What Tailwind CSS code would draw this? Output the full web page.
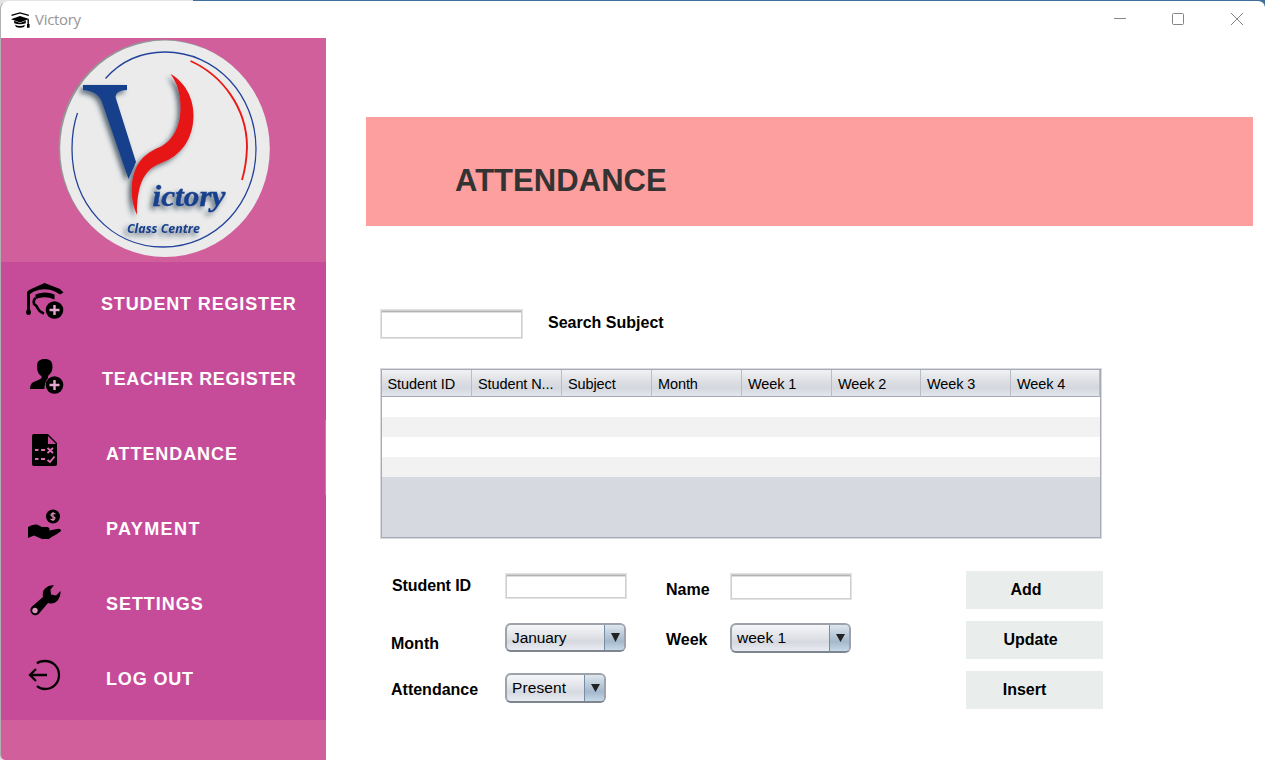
<!DOCTYPE html>
<html lang="en">
<head>
<meta charset="utf-8">
<title>Victory</title>
<script src="https://cdn.jsdelivr.net/npm/@tailwindcss/browser@4"></script>
</head>
<body class="h-[760px] w-[1265px] overflow-hidden bg-[linear-gradient(90deg,#e4e4e4_0_193px,#41709d_193px)] font-['Liberation_Sans',sans-serif] text-black">
<div class="flex h-[760px] flex-col overflow-hidden rounded-tl-[9px] rounded-tr-[7px] rounded-bl-[5px] border-l border-t border-l-[#b0b0b0] border-t-transparent bg-white bg-clip-padding">
  <header class="flex h-[37px] shrink-0 items-center justify-between pl-[10px] pr-[21px]">
    <div class="flex items-center gap-[5px]">
      <svg class="mt-[2px]" width="19" height="17" viewBox="0 0 19 17">
        <path d="M.5 3.400 9 .9l8.800 2.500" fill="none" stroke="#000" stroke-width="1.400"/>
        <path d="M0 7.200 9 4l9.200 3.100L9 10.500Z"/>
        <path d="M3.200 8.800 9 11l5.800-2.200v2.400Q9 13.500 3.200 11.200Z"/>
        <path d="M4 12.800Q9 15.200 14 12.800L13 15Q9 16.500 5 15Z"/>
        <path d="M17.200 7.200v6" fill="none" stroke="#000" stroke-width="1.400"/>
        <path d="M16 12h2.600v3.800H16Z"/>
      </svg>
      <h1 class="-mt-[2px] font-['Open_Sans',sans-serif] text-[15px] leading-5 tracking-[-0.3px] text-[#969696]">Victory</h1>
    </div>
    <svg class="-mt-[2px]" width="130" height="14" viewBox="0 0 130 14" fill="none" stroke="#858585">
      <path d="M0 6.500h12"/><rect x="58.500" y="1.500" width="11" height="11" rx="1"/><path d="m117 1 12 12M129 1l-12 12"/>
    </svg>
  </header>
  <div class="flex min-h-0 flex-1">
    <aside class="w-[325px] shrink-0 bg-[#d15f9b]">
      <div class="h-[224px]">
        <svg width="325" height="224" viewBox="1 38 325 224">
          <defs><filter id="shadow" x="-30%" y="-30%" width="160%" height="160%"><feDropShadow dx="-3" dy="3" stdDeviation="2.5" flood-color="#1e3447" flood-opacity=".7"/></filter></defs>
          <ellipse cx="163.500" cy="147.500" rx="105" ry="108" fill="#969696"/>
          <ellipse cx="165" cy="148.800" rx="104.800" ry="108.200" fill="#ebebeb"/>
          <path d="M105.500 78.500C121 61 142 52 165 52C216 52 256 95 256 149C256 203 216 247 163 247C111 247 72 204 72 149C72 136 74 123 77.500 113" fill="none" stroke="#24429a" stroke-width="1.300"/>
          <path d="M190.500 61C222 75 247 108 247 147Q246.500 165 242 180" fill="none" stroke="#eb1a16" stroke-width="1.900"/>
          <g filter="url(#shadow)">
            <path d="M83 85H127V90Q116 90 115.500 97L136 162L128.500 179L102 102Q98 91 83 90Z" fill="#143f8c"/>
            <path d="M170.500 74C185 82 193.500 98 193.500 115C193.500 139 181 156 161 163C142 170 137 188 137 215C130 200 130 181 136 168C141 157 150 151 160 147C178 138 183 116 179.500 96Q178 84 170.500 74Z" fill="#e71519"/>
            <text x="152.500" y="205.500" textLength="73" lengthAdjust="spacingAndGlyphs" fill="#173f8d" stroke="#173f8d" stroke-width=".4" class="font-['Liberation_Serif',serif] text-[30px] font-bold italic">ictory</text>
            <text x="127" y="233" textLength="73" lengthAdjust="spacingAndGlyphs" fill="#173f8d" class="font-['Open_Sans',sans-serif] text-[13px] font-bold italic">Class Centre</text>
          </g>
        </svg>
      </div>
      <nav class="h-[458px] bg-[#c64c9a] pt-2 text-[18px] font-bold leading-5 tracking-[0.85px] text-white">
        <a class="flex h-[75px] pl-[25px]">
          <svg class="mt-[12px] mr-[36px]" width="39" height="39" viewBox="0 0 39 39">
            <path d="M18.500 1 34 7 37.500 10.500 34 12.500 29 9.500Q19 5 8 9.500L4 12V27L5 30Q5 33 2.500 33T0 30L1 27V10L3 8Z"/>
            <path d="M9.500 12.500Q19 8.500 28.500 12.500V17.500Q19 13.500 9.500 17Z"/>
            <path d="M9.500 16Q7 18 8 22L10.500 24Q13 30 18 31.500" fill="none" stroke="#000" stroke-width="2.600"/>
            <circle cx="28.500" cy="28" r="8.800"/><path d="M23.500 28h10M28.500 23v10" stroke="#e6a9ce" stroke-width="2.400"/>
          </svg><span class="pt-6">STUDENT REGISTER</span>
        </a>
        <a class="flex h-[75px] pl-[25px]">
          <svg class="mt-[12px] mr-[37px]" width="39" height="39" viewBox="0 0 39 39">
            <path d="M11 9C11 4 14 2 18.500 2C24 2 26.500 4 26.500 10C26.500 14 25 16.500 22 19V21Q18.500 25 18.500 32H4Q4 25 10 24Q15 22 15.500 21V19Q11 17 11 9Z"/>
            <circle cx="28.500" cy="28" r="8.800"/><path d="M23.500 28h10M28.500 23v10" stroke="#e6a9ce" stroke-width="2.400"/>
          </svg><span class="pt-6 tracking-[0.65px]">TEACHER REGISTER</span>
        </a>
        <a class="flex h-[75px] border-r border-[#f0699f] pl-[31px]">
          <svg class="mt-[14px] mr-[48px]" width="26" height="32" viewBox="0 0 26 32">
            <path d="M2 0H16L25 9V30Q25 32 23 32H2Q0 32 0 30V2Q0 0 2 0Z"/>
            <path d="M16 2v8h8Z" fill="#c64c9a"/>
            <g fill="none" stroke="#d86faf" stroke-width="1.900"><path d="M3 16h3.500M9 16h4M3 25h3.500M9 25h4M15.500 14l5.500 5M21 14l-5.500 5M15.500 26l2.500 2 4.500-5.500"/></g>
          </svg><span class="pt-6 tracking-[0.92px]">ATTENDANCE</span>
        </a>
        <a class="flex h-[75px] pl-[27px]">
          <svg class="mt-[14px] mr-[44px]" width="34" height="32" viewBox="0 0 34 32">
            <circle cx="25" cy="7.500" r="7"/><path d="M27.500 5Q25 3.500 23.500 5T25 7.500T26.500 10Q25 11.500 22.500 10M25 3v9" fill="none" stroke="#db8bba" stroke-width="1.200"/>
            <path d="M0 18Q4 15 9 15.500L14 18H20Q22 19 21.500 21.500L29 20Q33 19 33 22L29 25Q24 27.500 21 30H14L6 26.500 0 29Z"/>
          </svg><span class="pt-6 tracking-[1.4px]">PAYMENT</span>
        </a>
        <a class="flex h-[75px] pl-[29px]">
          <svg class="mt-[15px] mr-[44px]" width="32" height="31" viewBox="0 0 32 31">
            <path d="M24 .3Q19-.5 15 3.500Q12 6 13 12L2 21.500A5 5 0 1 0 9.500 28L18 18Q24 20 28 15Q31 11 30.500 6L26 10.500 21 9.500 20.500 4.500Z"/>
            <circle cx="5" cy="25.500" r="2.700" fill="#d994bd"/>
          </svg><span class="pt-6 tracking-[0.95px]">SETTINGS</span>
        </a>
        <a class="flex h-[75px] pl-[27px]">
          <svg class="mt-[14px] mr-[44px]" width="34" height="32" viewBox="0 0 34 32" fill="none" stroke="#000" stroke-width="2.300">
            <path d="M9 4.500C11 2.500 14 2 17 2C25 2 31 8 31 16S25 30 17 30C14 30 11 29 9 27M19 16H2M8 10l-6 6 6 6"/>
          </svg><span class="pt-6">LOG OUT</span>
        </a>
      </nav>
    </aside>
    <main class="flex flex-1 flex-col items-start pl-10 pt-[79px]">
      <div class="flex h-[109px] w-[887px] items-center bg-[#fc9f9e] pl-[89px] pt-[19px]">
        <h2 class="text-[31px] font-bold leading-9 tracking-[0.05px] text-[#333]">ATTENDANCE</h2>
      </div>
      <label class="ml-[14px] mt-[83px] flex h-[30px] items-start gap-[25px] text-base font-bold">
        <input class="h-[30px] w-[143px] border border-[#e2e2e2] bg-white shadow-[inset_0_0_0_1px_#cfcfcf,inset_0_2px_0_#b3b3b3,inset_0_3px_0_#dedede]">
        <span class="pt-[2px]">Search Subject</span>
      </label>
      <div class="ml-[14px] mt-[29px] flex h-[171px] w-[722px] flex-col border border-[#d9dae0] bg-[#d6d9e0] outline outline-1 -outline-offset-2 outline-[#a7abb7]">
        <table class="w-[719px] table-fixed text-[14.500px] leading-[24px]">
          <colgroup><col class="w-[90px]"><col class="w-[90px]"><col class="w-[90px]"><col class="w-[90px]"><col class="w-[90px]"><col class="w-[89px]"><col class="w-[90px]"><col></colgroup>
          <thead><tr class="h-[27px] border-b border-[#a3a7b2] bg-[linear-gradient(#f3f4f6,#dcdee3_48%,#d4d7de_70%,#e3e6ed)] text-left *:truncate *:border-r *:border-[#b9bcc4] *:p-0 *:pl-[6.500px] *:pt-[3px] *:font-normal *:tracking-[-0.1px]"><th>Student ID</th><th>Student N...</th><th>Subject</th><th>Month</th><th>Week 1</th><th>Week 2</th><th>Week 3</th><th>Week 4</th></tr></thead>
          <tbody>
            <tr class="h-5 bg-white"><td colspan="8"></td></tr><tr class="h-5 bg-[#f2f2f2]"><td colspan="8"></td></tr>
            <tr class="h-5 bg-white"><td colspan="8"></td></tr><tr class="h-5 bg-[#f2f2f2]"><td colspan="8"></td></tr>
          </tbody>
        </table>
      </div>
      <form class="ml-[25px] mt-8 grid h-[138px] grid-cols-[114px_161px_64px_236px_137px] grid-rows-[38px_38px_38px] gap-y-3 text-base font-bold">
        <label class="pl-px pt-[3px] tracking-[-0.1px]">Student ID</label>
        <input class="mt-[2px] h-[26px] w-[122px] border border-[#e2e2e2] bg-white shadow-[inset_0_0_0_1px_#cfcfcf,inset_0_2px_0_#b3b3b3,inset_0_3px_0_#dedede]">
        <label class="pt-[7px]">Name</label>
        <input class="mt-[2px] h-[27px] w-[122px] border border-[#e2e2e2] bg-white shadow-[inset_0_0_0_1px_#cfcfcf,inset_0_2px_0_#b3b3b3,inset_0_3px_0_#dedede]">
        <button type="button" class="bg-[#e9eeed] pr-[17px]">Add</button>

        <label class="pt-[11px]">Month</label>
        <div class="mt-[2px] flex h-[29px] w-[121px] overflow-hidden rounded-[6px] border-2 border-[#9ea2ab] border-b-[#7e858f] bg-[linear-gradient(#f5f6f8,#dfe1e6_50%,#d5d8df_65%,#e8ebf1)] text-[15.500px] font-normal leading-[26px]">
          <span class="flex-1 pl-[5px] tracking-[-0.1px]">January</span>
          <span class="flex w-[20px] items-center justify-center border-l border-[#768ea4] bg-[linear-gradient(#dce6ee,#b0c2d3_50%,#a3b8cb_65%,#c5d9e8)] pl-px"><svg width="9" height="9"><path d="M0 0h9L4.500 9Z" fill="#222"/></svg></span>
        </div>
        <label class="pt-[7px]">Week</label>
        <div class="mt-[2px] flex h-[30px] w-[121px] overflow-hidden rounded-[6px] border-2 border-[#9ea2ab] border-b-[#7e858f] bg-[linear-gradient(#f5f6f8,#dfe1e6_50%,#d5d8df_65%,#e8ebf1)] text-[15.500px] font-normal leading-[26px]">
          <span class="flex-1 pl-[5px]">week 1</span>
          <span class="flex w-[20px] items-center justify-center border-l border-[#768ea4] bg-[linear-gradient(#dce6ee,#b0c2d3_50%,#a3b8cb_65%,#c5d9e8)] pl-px"><svg width="9" height="8"><path d="M0 0h9L4.500 8Z" fill="#222"/></svg></span>
        </div>
        <button type="button" class="bg-[#e9eeed] pr-[8px]">Update</button>

        <label class="pt-[7px]">Attendance</label>
        <div class="mt-[2px] flex h-[30px] w-[101px] overflow-hidden rounded-[6px] border-2 border-[#9ea2ab] border-b-[#7e858f] bg-[linear-gradient(#f5f6f8,#dfe1e6_50%,#d5d8df_65%,#e8ebf1)] text-[15.500px] font-normal leading-[26px]">
          <span class="flex-1 pl-[5px] tracking-[0.1px]">Present</span>
          <span class="flex w-[20px] items-center justify-center border-l border-[#768ea4] bg-[linear-gradient(#dce6ee,#b0c2d3_50%,#a3b8cb_65%,#c5d9e8)] pl-px"><svg width="9" height="8"><path d="M0 0h9L4.500 8Z" fill="#222"/></svg></span>
        </div>
        <button type="button" class="col-start-5 bg-[#e9eeed] pr-[20px]">Insert</button>
      </form>
    </main>
  </div>
</div>
</body>
</html>
